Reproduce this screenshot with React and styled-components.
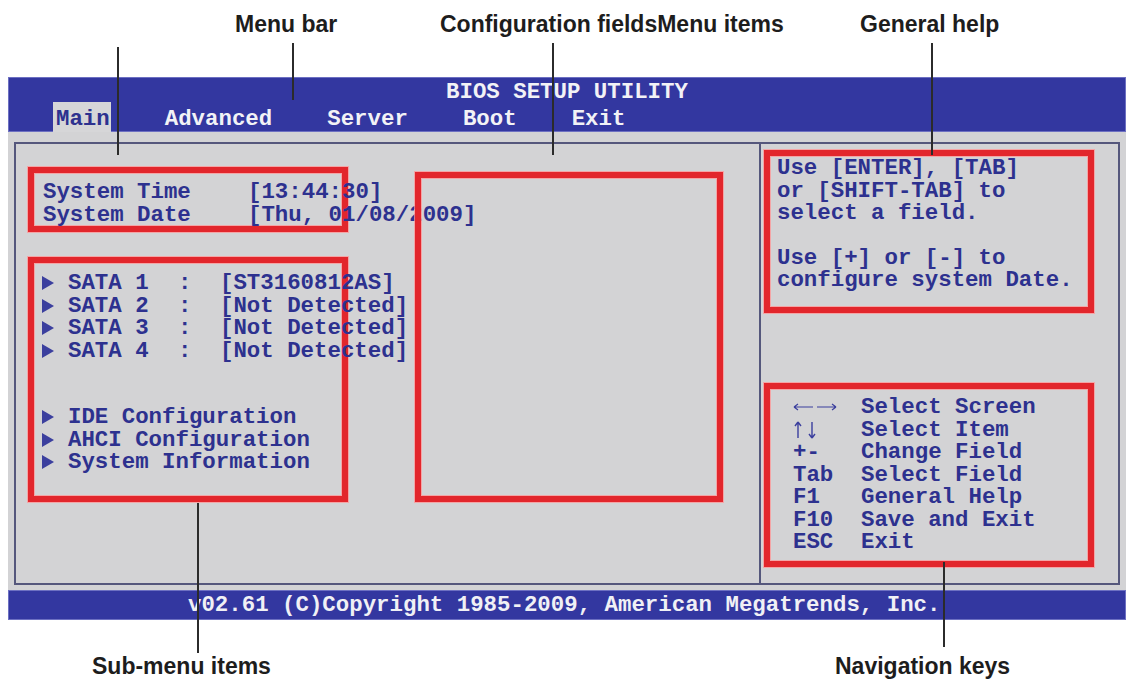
import React from 'react';
import styled, { createGlobalStyle } from 'styled-components';

const BLUE = '#3337a0';
const INK = '#2d318f';
const FRAME = '#55577c';
const RED = '#e2262c';

const GlobalStyle = createGlobalStyle`
  html, body { margin: 0; padding: 0; background: #fff; }
`;

// --- Layout ---
const Page = styled.div`
  position: relative;
  width: 1132px;
  height: 690px;
  background: #fff;
  overflow: hidden;
`;

const TopLabels = styled.div`
  display: grid;
  grid-template-columns: 205px 420px 1fr;
  height: 77px;
  padding: 13px 0 0 235px;
  box-sizing: border-box;
`;

const BottomLabels = styled.div`
  display: grid;
  grid-template-columns: 743px 1fr;
  padding: 35px 0 0 92px;
`;

const Label = styled.div`
  font: bold 23px/23px "Liberation Sans", Arial, sans-serif;
  color: #1d1d1d;
  white-space: nowrap;
`;

const Callout = styled.div`
  position: absolute;
  left: ${({ $x }) => $x}px;
  top: ${({ $y }) => $y}px;
  height: ${({ $h }) => $h}px;
  width: 2px;
  background: #2b2b2b;
`;

// --- BIOS screen ---
const Screen = styled.div`
  margin-left: 8px;
  width: 1118px;
  font-family: "Liberation Mono", "Courier New", monospace;
  font-weight: bold;
`;

const Header = styled.header`
  height: 55px;
  background: ${BLUE};
  box-shadow: inset 0 0 0 1px #6d70c2;
  display: flex;
  flex-direction: column;
  padding-top: 5px;
  box-sizing: border-box;
  color: #f2f2f6;
`;

const Title = styled.div`
  text-align: center;
  font-size: 22.4px;
  line-height: 20px;
  height: 20px;
`;

const MenuRow = styled.nav`
  display: flex;
  gap: 51px;
  margin-top: auto;
  padding-left: 45px;
  height: 30px;
`;

const MenuTab = styled.div`
  display: flex;
  align-items: center;
  padding: 4px 1px 0 3px;
  font-size: 22.4px;
  background: ${({ $active }) => ($active ? '#d6d6d8' : 'transparent')};
  color: ${({ $active }) => ($active ? INK : '#f2f2f6')};
`;

const Body = styled.div`
  height: 458px;
  padding: 10px 6px 5px;
  box-sizing: border-box;
  background: #d3d3d5;
`;

const Frame = styled.div`
  height: 100%;
  border: 2px solid ${FRAME};
  box-sizing: border-box;
  display: grid;
  grid-template-columns: 745px 1fr;
  color: ${INK};
  font-size: 22.4px;
  line-height: 22.5px;
  white-space: nowrap;
`;

const MainPane = styled.section`
  display: flex;
  align-items: flex-start;
  gap: 67px;
  padding: 23px 0 0 12px;
  border-right: 2px solid ${FRAME};
`;

const Column = styled.div`
  display: flex;
  flex-direction: column;
  gap: 25px;
`;

const SidePane = styled.aside`
  display: flex;
  flex-direction: column;
  gap: 70px;
  padding: 6px 0 0 3px;
`;

const RedBox = styled.div`
  width: ${({ $w }) => $w}px;
  height: ${({ $h }) => $h}px;
  margin-top: ${({ $mt = 0 }) => $mt}px;
  padding: ${({ $pad = '0' }) => $pad};
  border: 6px solid ${RED};
  box-shadow: 0 0 0 1px rgba(255, 150, 150, 0.75), inset 0 0 0 1px rgba(255, 150, 150, 0.75);
  box-sizing: border-box;
`;

const FieldGrid = styled.div`
  display: grid;
  grid-template-columns: 205px auto;
`;

const DriveGrid = styled.div`
  display: grid;
  grid-template-columns: 26px 110px 42px auto;
  align-items: center;
`;

const SubGrid = styled.div`
  display: grid;
  grid-template-columns: 26px auto;
  align-items: center;
  margin-top: 44px;
`;

const Pointer = styled.span`
  width: 0;
  height: 0;
  border-top: 7px solid transparent;
  border-bottom: 7px solid transparent;
  border-left: 12px solid #3b3f9e;
`;

const HelpLine = styled.div`
  height: 22.5px;
  margin-bottom: ${({ $gap }) => ($gap ? 22 : 0)}px;
`;

const KeyGrid = styled.div`
  display: grid;
  grid-template-columns: 68px auto;
  align-items: center;
`;

const KeyCell = styled.span`
  display: flex;
  align-items: center;
  height: 22.5px;
`;

const Footer = styled.footer`
  height: 30px;
  background: ${BLUE};
  box-shadow: inset 0 0 0 1px #6d70c2;
  color: #f0f0f5;
  font-size: 22.4px;
  line-height: 31px;
  padding-left: 180px;
  white-space: nowrap;
`;

// thin arrow glyphs used on the key legend
const LeftRight = () => (
  <svg width="44" height="10" viewBox="0 0 44 10" fill="none" stroke="#3b3f9e" strokeWidth="1.2">
    <path d="M1 5h19M1 5l4-3M1 5l4 3" />
    <path d="M24 5h19M43 5l-4-3M43 5l-4 3" />
  </svg>
);

const UpDown = () => (
  <svg width="26" height="18" viewBox="0 0 26 18" fill="none" stroke="#3b3f9e" strokeWidth="1.4">
    <path d="M5 17V1M5 1L2 5M5 1l3 4" />
    <path d="M19 1v16M19 17l-3-4M19 17l3-4" />
  </svg>
);

const menus = ['Main', 'Advanced', 'Server', 'Boot', 'Exit'];

const drives = [
  ['SATA 1', '[ST3160812AS]'],
  ['SATA 2', '[Not Detected]'],
  ['SATA 3', '[Not Detected]'],
  ['SATA 4', '[Not Detected]'],
];

const subMenus = ['IDE Configuration', 'AHCI Configuration', 'System Information'];

const helpLines = [
  ['Use [ENTER], [TAB]'],
  ['or [SHIFT-TAB] to'],
  ['select a field.', true],
  ['Use [+] or [-] to'],
  ['configure system Date.'],
];

const keys = [
  [<LeftRight />, 'Select Screen'],
  [<UpDown />, 'Select Item'],
  ['+-', 'Change Field'],
  ['Tab', 'Select Field'],
  ['F1', 'General Help'],
  ['F10', 'Save and Exit'],
  ['ESC', 'Exit'],
];

const callouts = [
  { x: 117, y: 47, h: 108 },
  { x: 292, y: 43, h: 57 },
  { x: 552, y: 43, h: 112 },
  { x: 931, y: 43, h: 112 },
  { x: 197, y: 503, h: 150 },
  { x: 943, y: 562, h: 85 },
];

export default function App() {
  return (
    <Page>
      <GlobalStyle />
      <TopLabels>
        <Label>Menu bar</Label>
        <Label>Configuration fieldsMenu items</Label>
        <Label>General help</Label>
      </TopLabels>

      <Screen>
        <Header>
          <Title>BIOS SETUP UTILITY</Title>
          <MenuRow>
            {menus.map((m, i) => (
              <MenuTab key={m} $active={i === 0}>{m}</MenuTab>
            ))}
          </MenuRow>
        </Header>

        <Body>
          <Frame>
            <MainPane>
              <Column>
                <RedBox $w={320} $h={65} $pad="8px 0 0 9px">
                  <FieldGrid>
                    <span>System Time</span>
                    <span>[13:44:30]</span>
                    <span>System Date</span>
                    <span>[Thu, 01/08/2009]</span>
                  </FieldGrid>
                </RedBox>
                <RedBox $w={320} $h={245} $pad="9px 0 0 8px">
                  <DriveGrid>
                    {drives.map(([name, value]) => (
                      <React.Fragment key={name}>
                        <Pointer />
                        <span>{name}</span>
                        <span>:</span>
                        <span>{value}</span>
                      </React.Fragment>
                    ))}
                  </DriveGrid>
                  <SubGrid>
                    {subMenus.map((s) => (
                      <React.Fragment key={s}>
                        <Pointer />
                        <span>{s}</span>
                      </React.Fragment>
                    ))}
                  </SubGrid>
                </RedBox>
              </Column>
              <RedBox $w={308} $h={330} $mt={5} />
            </MainPane>

            <SidePane>
              <RedBox $w={330} $h={163} $pad="1px 0 0 7px">
                {helpLines.map(([text, gap]) => (
                  <HelpLine key={text} $gap={gap}>{text}</HelpLine>
                ))}
              </RedBox>
              <RedBox $w={330} $h={184} $pad="7px 0 0 23px">
                <KeyGrid>
                  {keys.map(([k, desc]) => (
                    <React.Fragment key={desc}>
                      <KeyCell>{k}</KeyCell>
                      <span>{desc}</span>
                    </React.Fragment>
                  ))}
                </KeyGrid>
              </RedBox>
            </SidePane>
          </Frame>
        </Body>

        <Footer>v02.61 (C)Copyright 1985-2009, American Megatrends, Inc.</Footer>
      </Screen>

      <BottomLabels>
        <Label>Sub-menu items</Label>
        <Label>Navigation keys</Label>
      </BottomLabels>

      {callouts.map((c) => (
        <Callout key={`${c.x}-${c.y}`} $x={c.x} $y={c.y} $h={c.h} />
      ))}
    </Page>
  );
}
